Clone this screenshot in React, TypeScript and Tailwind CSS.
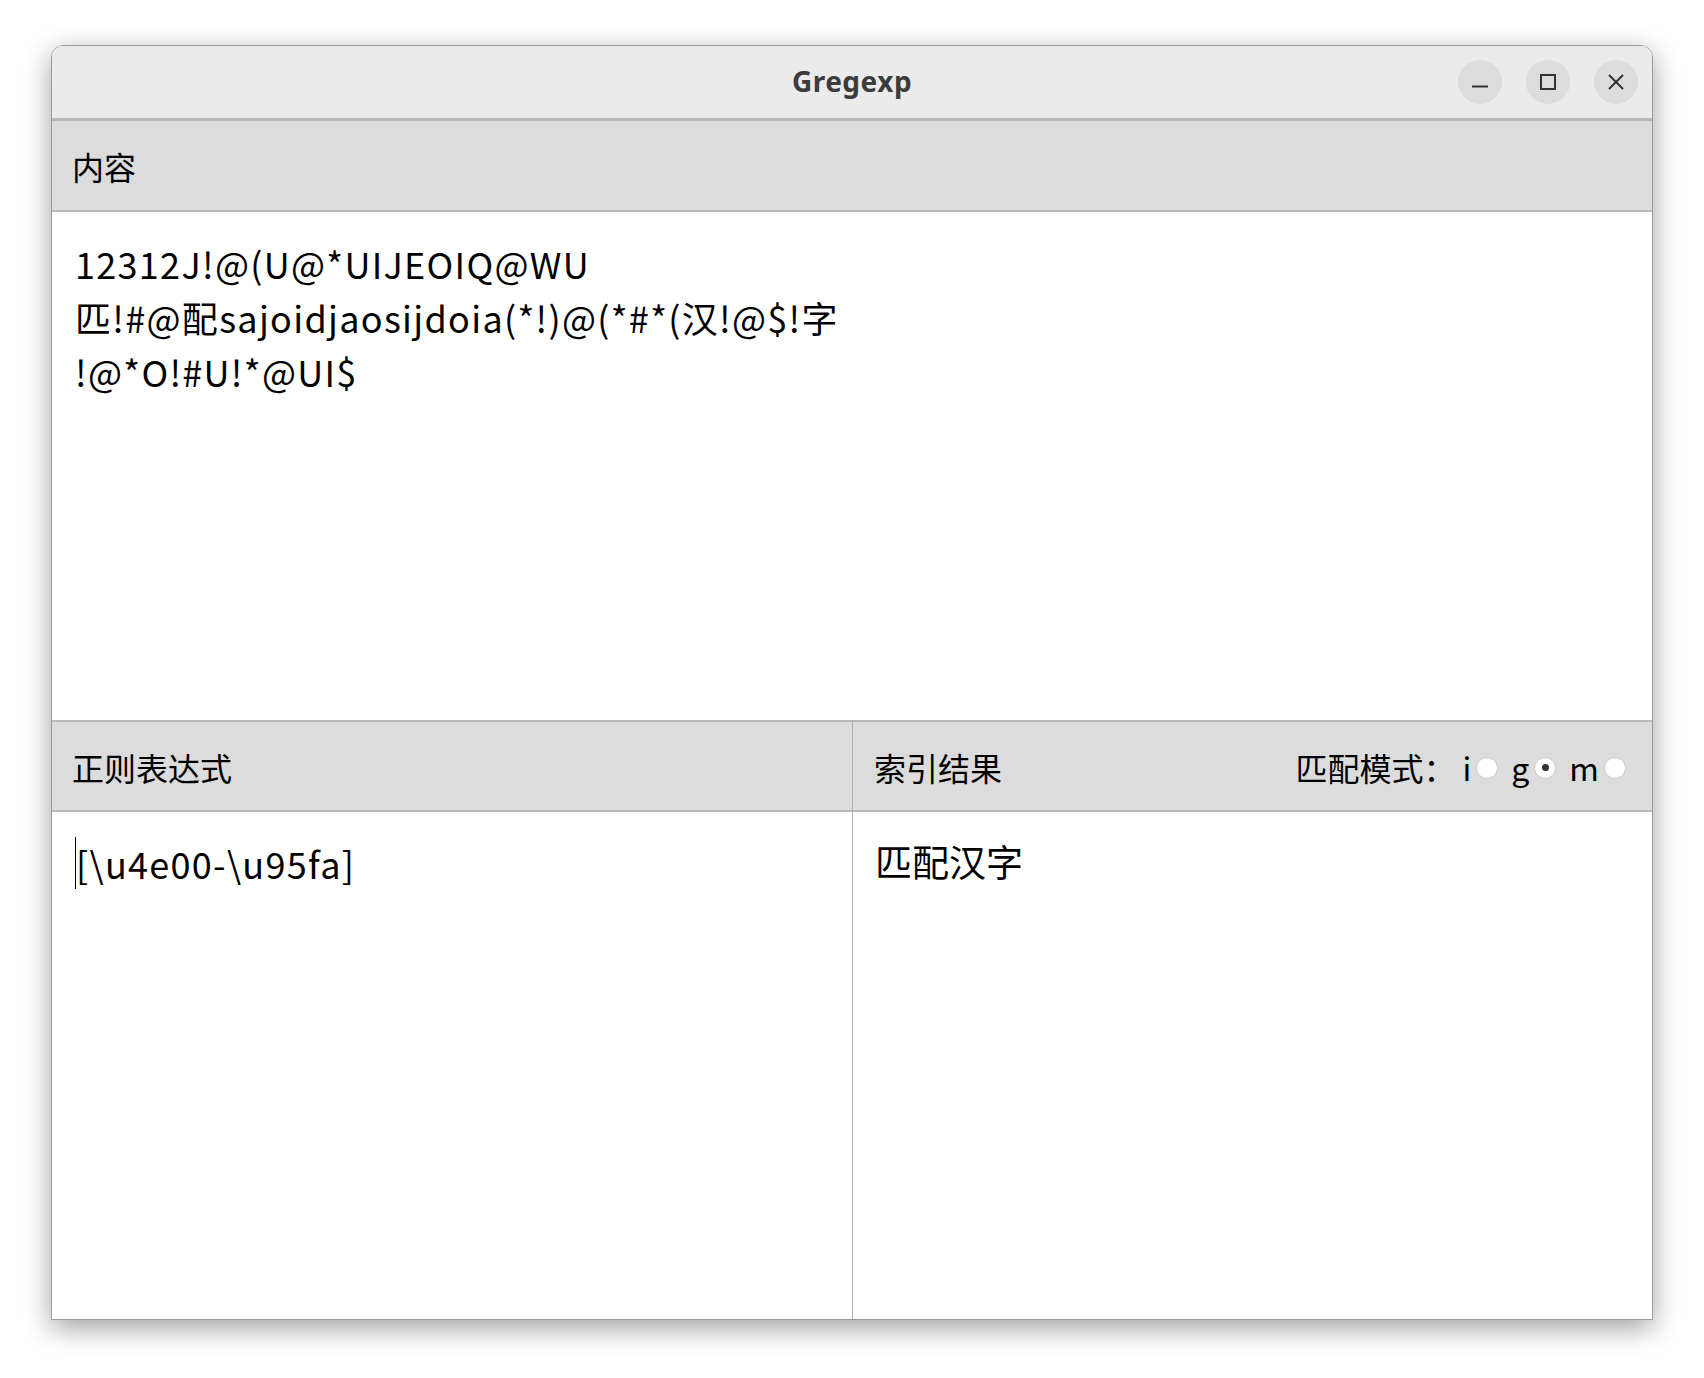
import React from "react"

const font = "font-['Noto_Sans_CJK_SC','Noto_Sans',sans-serif]"

function WinButton({ children }: { children: React.ReactNode }) {
  return (
    <div className="flex h-[44px] w-[44px] items-center justify-center rounded-full bg-[#dcdcdc]">
      <svg width="16" height="16" viewBox="0 0 16 16" fill="none" stroke="#333" strokeWidth="2">
        {children}
      </svg>
    </div>
  )
}

function Radio({ label, checked }: { label: string; checked?: boolean }) {
  return (
    <div className="flex items-center gap-[5px]">
      <span>{label}</span>
      <span className="mt-[2px] flex h-[22px] w-[22px] items-center justify-center rounded-full border border-[#cfc9c4] bg-white">
        {checked && <span className="h-[7px] w-[7px] rounded-full bg-[#2e3436]" />}
      </span>
    </div>
  )
}

export default function App() {
  return (
    <div className={`h-[1378px] w-[1704px] bg-white pl-[51px] pt-[45px] ${font}`}>
      <div className="flex h-[1275px] w-[1602px] flex-col overflow-hidden rounded-t-[12px] border border-[#9b9b9b] shadow-[0_8px_28px_rgba(0,0,0,0.38)]">
        {/* title bar */}
        <div className="grid h-[75px] shrink-0 grid-cols-[1fr_auto_1fr] items-center border-b-[3px] border-[#b7b7b7] bg-[#ebebeb]">
          <div />
          <div className="pb-[2px] font-['Noto_Sans',sans-serif] text-[28px] font-bold tracking-[0.5px] text-[#3c3c3c]">
            Gregexp
          </div>
          <div className="flex justify-end gap-[24px] pr-[14px]">
            <WinButton>
              <line x1="0" y1="12.5" x2="16" y2="12.5" />
            </WinButton>
            <WinButton>
              <rect x="1" y="1" width="14" height="14" />
            </WinButton>
            <WinButton>
              <path d="M1 1 L15 15 M15 1 L1 15" />
            </WinButton>
          </div>
        </div>

        {/* content */}
        <div className="flex h-[91px] shrink-0 items-center border-b-2 border-[#b9b9b9] bg-[#dcdcdc] px-[20px] pt-[1px] text-[32px] text-black">
          内容
        </div>
        <div className="h-[508px] shrink-0 bg-white px-[23px] pt-[24px] text-[36px] leading-[54px] tracking-[1.3px] text-black">
          <div>12312J!@(U@*UIJEOIQ@WU</div>
          <div>匹!#@配sajoidjaosijdoia(*!)@(*#*(汉!@$!字</div>
          <div>!@*O!#U!*@UI$</div>
        </div>

        {/* regex + result */}
        <div className="grid flex-1 grid-cols-2">
          <div className="flex flex-col">
            <div className="flex h-[92px] shrink-0 items-center border-y-2 border-[#b9b9b9] bg-[#dcdcdc] px-[20px] pt-[1px] text-[32px] text-black">
              正则表达式
            </div>
            <div className="flex-1 bg-white px-[23px] pt-[24px] text-[36px] leading-[54px] tracking-[1.3px] text-black">
              <span className="border-l border-black">[\u4e00-\u95fa]</span>
            </div>
          </div>
          <div className="flex flex-col border-l border-[#b0b0b0]">
            <div className="flex h-[92px] shrink-0 items-center justify-between border-y-2 border-[#b9b9b9] bg-[#dcdcdc] pl-[21px] pr-[26px] pt-[1px] text-[32px] text-black">
              <span>索引结果</span>
              <div className="flex items-center gap-[13px]">
                <span className="mr-[-6px]">匹配模式：</span>
                <Radio label="i" />
                <Radio label="g" checked />
                <Radio label="m" />
              </div>
            </div>
            <div className="flex-1 bg-white px-[22px] pt-[22px] text-[37px] leading-[54px] text-black">
              匹配汉字
            </div>
          </div>
        </div>
      </div>
    </div>
  )
}
